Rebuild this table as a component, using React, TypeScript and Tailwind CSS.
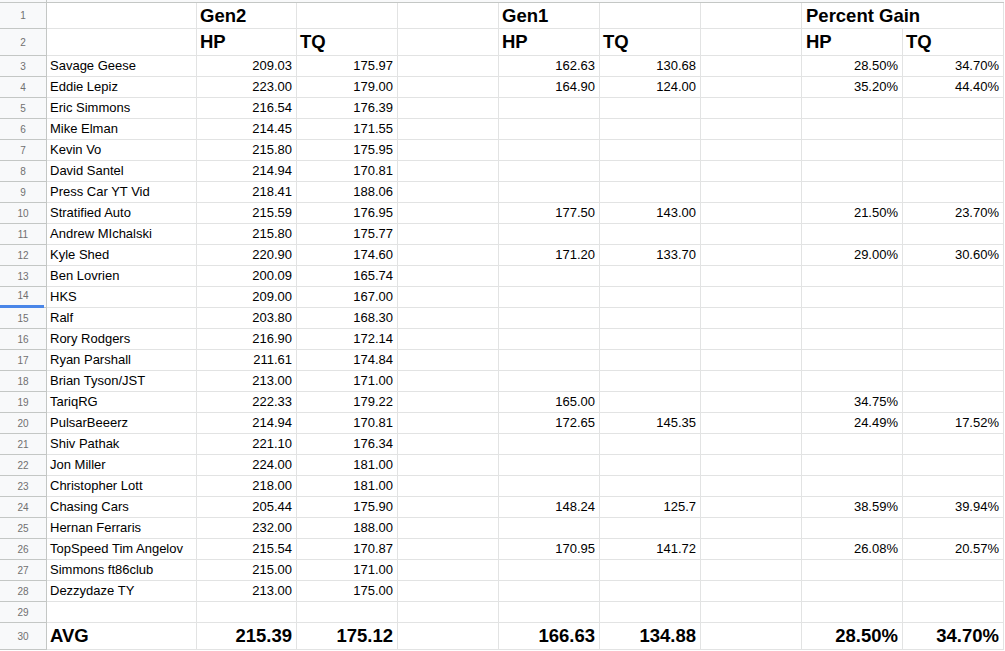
import React from "react";

type Row = (string | null)[];

// columns: A name, B gen2 hp, C gen2 tq, D, E gen1 hp, F gen1 tq, G, H pct hp, I pct tq
const rows: Row[] = [
    ["Savage Geese", "209.03", "175.97", null, "162.63", "130.68", null, "28.50%", "34.70%"],
    ["Eddie Lepiz", "223.00", "179.00", null, "164.90", "124.00", null, "35.20%", "44.40%"],
    ["Eric Simmons", "216.54", "176.39"],
    ["Mike Elman", "214.45", "171.55"],
    ["Kevin Vo", "215.80", "175.95"],
    ["David Santel", "214.94", "170.81"],
    ["Press Car YT Vid", "218.41", "188.06"],
    ["Stratified Auto", "215.59", "176.95", null, "177.50", "143.00", null, "21.50%", "23.70%"],
    ["Andrew MIchalski", "215.80", "175.77"],
    ["Kyle Shed", "220.90", "174.60", null, "171.20", "133.70", null, "29.00%", "30.60%"],
    ["Ben Lovrien", "200.09", "165.74"],
    ["HKS", "209.00", "167.00"],
    ["Ralf", "203.80", "168.30"],
    ["Rory Rodgers", "216.90", "172.14"],
    ["Ryan Parshall", "211.61", "174.84"],
    ["Brian Tyson/JST", "213.00", "171.00"],
    ["TariqRG", "222.33", "179.22", null, "165.00", null, null, "34.75%", null],
    ["PulsarBeeerz", "214.94", "170.81", null, "172.65", "145.35", null, "24.49%", "17.52%"],
    ["Shiv Pathak", "221.10", "176.34"],
    ["Jon Miller", "224.00", "181.00"],
    ["Christopher Lott", "218.00", "181.00"],
    ["Chasing Cars", "205.44", "175.90", null, "148.24", "125.7", null, "38.59%", "39.94%"],
    ["Hernan Ferraris", "232.00", "188.00"],
    ["TopSpeed Tim Angelov", "215.54", "170.87", null, "170.95", "141.72", null, "26.08%", "20.57%"],
    ["Simmons ft86club", "215.00", "171.00"],
    ["Dezzydaze TY", "213.00", "175.00"],
    [],
];

const avg: Row = ["AVG", "215.39", "175.12", null, "166.63", "134.88", null, "28.50%", "34.70%"];

const cell = "border-r border-b border-[#e2e3e3] flex items-center overflow-hidden whitespace-nowrap";
const rowHead = "border-r border-b border-[#c4c7c5] bg-[#f8f9fa] flex items-center justify-center text-[10px] text-[#707070]";

function RowNum({ n, h, marked }: { n: number; h: string; marked?: boolean }) {
    return (
        <div className={`${rowHead} ${h} relative`}>
            <span className={marked ? "-mt-[4px]" : ""}>{n}</span>
            {marked && <div className="absolute left-0 right-[2px] bottom-[-1px] h-[3px] bg-[#4a86e8]" />}
        </div>
    );
}

function DataRow({ r, n }: { r: Row; n: number }) {
    const cols = Array.from({ length: 9 }, (_, i) => r[i] ?? null);
    return (
        <>
            <RowNum n={n} h="h-[21px]" marked={n === 14} />
            {cols.map((v, i) => (
                <div
                    key={i}
                    className={`${cell} h-[21px] ${i === 0 ? "pl-[3px]" : "justify-end pr-[4px]"}`}
                >
                    {v}
                </div>
            ))}
        </>
    );
}

export default function App() {
    return (
        <div
            className="w-[1005px] h-[651px] overflow-hidden bg-white text-black text-[13px]"
            style={{ fontFamily: '"Liberation Sans", Arial, sans-serif' }}
        >
            <div className="grid grid-cols-[47px_150px_100px_101px_101px_101px_101px_101px_101px_101px]">
                {/* top strip */}
                <div className="h-[3px] bg-[#f8f9fa] border-r border-b border-[#c4c7c5]" />
                <div className="col-span-9 h-[3px] bg-[#f8f9fa] border-b border-[#c4c7c5]" />

                {/* row 1 */}
                <RowNum n={1} h="h-[26px]" />
                <div className={`${cell} h-[26px]`} />
                <div className={`${cell} h-[26px] pl-[3px] text-[18.5px] font-bold`}>Gen2</div>
                <div className={`${cell} h-[26px]`} />
                <div className={`${cell} h-[26px]`} />
                <div className={`${cell} h-[26px] pl-[3px] text-[18.5px] font-bold`}>Gen1</div>
                <div className={`${cell} h-[26px]`} />
                <div className={`${cell} h-[26px]`} />
                <div className={`${cell} h-[26px] col-span-2 pl-[4px] text-[18.5px] font-bold`}>Percent Gain</div>

                {/* row 2 */}
                <RowNum n={2} h="h-[27px]" />
                <div className={`${cell} h-[27px]`} />
                <div className={`${cell} h-[27px] pl-[3px] text-[18.5px] font-bold`}>HP</div>
                <div className={`${cell} h-[27px] pl-[3px] text-[18.5px] font-bold`}>TQ</div>
                <div className={`${cell} h-[27px]`} />
                <div className={`${cell} h-[27px] pl-[3px] text-[18.5px] font-bold`}>HP</div>
                <div className={`${cell} h-[27px] pl-[3px] text-[18.5px] font-bold`}>TQ</div>
                <div className={`${cell} h-[27px]`} />
                <div className={`${cell} h-[27px] pl-[4px] text-[18.5px] font-bold`}>HP</div>
                <div className={`${cell} h-[27px] pl-[3px] text-[18.5px] font-bold`}>TQ</div>

                {rows.map((r, i) => (
                    <DataRow key={i} r={r} n={i + 3} />
                ))}

                {/* row 30 */}
                <RowNum n={30} h="h-[27px]" />
                {avg.map((v, i) => (
                    <div
                        key={i}
                        className={`${cell} h-[27px] text-[18.5px] font-bold ${i === 0 ? "pl-[3px]" : "justify-end pr-[4px]"}`}
                    >
                        {v}
                    </div>
                ))}
            </div>
        </div>
    );
}
